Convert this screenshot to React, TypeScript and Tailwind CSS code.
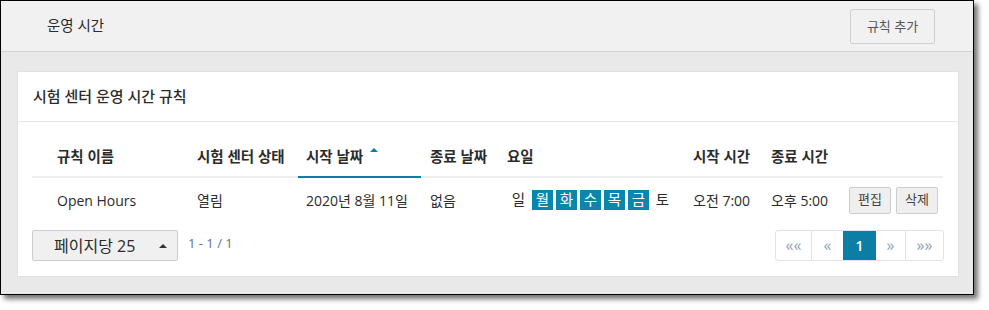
import React from 'react';

const days = [
  { label: '일', on: false },
  { label: '월', on: true },
  { label: '화', on: true },
  { label: '수', on: true },
  { label: '목', on: true },
  { label: '금', on: true },
  { label: '토', on: false },
];

const columns = [
  { label: '규칙 이름', pad: 'pl-[25px]' },
  { label: '시험 센터 상태', pad: 'pl-[8px]' },
  { label: '시작 날짜', pad: 'pl-[8px]', sorted: true },
  { label: '종료 날짜', pad: 'pl-[9px]' },
  { label: '요일', pad: 'pl-[8px]' },
  { label: '시작 시간', pad: 'pl-[8px]' },
  { label: '종료 시간', pad: 'pl-[8px]' },
  { label: '', pad: 'pl-[8px]' },
];

const gridCols = 'grid grid-cols-[157px_109px_123px_78px_186px_78px_78px_102px]';

export default function App() {
  return (
    <div className="w-[989px] h-[310px] bg-white font-['Open_Sans','Noto_Sans_CJK_KR',sans-serif] text-[#2b2b2b]">
      <div className="w-[974px] h-[295px] border border-black shadow-[4px_4px_5px_rgba(0,0,0,0.55)] flex flex-col">
        {/* top bar */}
        <div className="h-[51px] shrink-0 bg-[#f1f1f1] border-b border-[#d4d4d4] flex items-center justify-between pl-[46px] pr-[38px]">
          <h1 className="text-[14.5px]">운영 시간</h1>
          <button className="w-[85px] h-[35px] mt-[1px] border border-[#cfcfcf] rounded-[2px] bg-[#f1f1f1] text-[13px] text-[#555]">
            규칙 추가
          </button>
        </div>

        <div className="flex-1 bg-[#e9e9e9] pl-[16px] pr-[15px] pt-[19px]">
          <div className="bg-white border border-[#e1e1e1] w-[942px]">
            <div className="h-[50px] flex items-center pl-[15px] border-b border-[#e6e6e6]">
              <h2 className="text-[15px] font-medium">시험 센터 운영 시간 규칙</h2>
            </div>

            <div className="px-[14px] pt-[15px] pb-[15px]">
              {/* header row */}
              <div className={gridCols}>
                {columns.map((c, i) => (
                  <div
                    key={i}
                    className={`h-[41px] flex items-center text-[14.5px] font-semibold border-b-2 ${c.pad} ${
                      c.sorted ? 'border-[#0b7ea6]' : 'border-[#eeeeee]'
                    }`}
                  >
                    {c.label}
                    {c.sorted && (
                      <span className="ml-[7px] -mt-[13px] w-0 h-0 border-l-[4px] border-r-[4px] border-b-[4px] border-l-transparent border-r-transparent border-b-[#0b7ea6]" />
                    )}
                  </div>
                ))}
              </div>

              {/* data row */}
              <div className={`${gridCols} h-[44px] items-center text-[14px]`}>
                <div className="pl-[25px]">Open Hours</div>
                <div className="pl-[8px]">열림</div>
                <div className="pl-[8px]">2020년 8월 11일</div>
                <div className="pl-[9px]">없음</div>
                <div className="pl-[9px] flex gap-[3px]">
                  {days.map((d) => (
                    <span
                      key={d.label}
                      className={`w-[21px] h-[20px] flex items-center justify-center text-[14.5px] ${
                        d.on ? 'bg-[#0886ae] text-white' : ''
                      }`}
                    >
                      {d.label}
                    </span>
                  ))}
                </div>
                <div className="pl-[8px]">오전 7:00</div>
                <div className="pl-[8px]">오후 5:00</div>
                <div className="pl-[8px] flex gap-[5px]">
                  <button className="w-[42px] h-[27px] border border-[#cdcdcd] rounded-[2px] bg-[#efefef] text-[13px] text-[#444]">
                    편집
                  </button>
                  <button className="w-[42px] h-[27px] border border-[#cdcdcd] rounded-[2px] bg-[#efefef] text-[13px] text-[#444]">
                    삭제
                  </button>
                </div>
              </div>

              {/* footer */}
              <div className="mt-[8px] flex items-center justify-between">
                <div className="flex items-center">
                  <div className="w-[146px] h-[31px] border border-[#cdcdcd] rounded-[2px] bg-[#f0f0f0] flex items-center justify-between pl-[21px] pr-[10px]">
                    <span className="text-[16px]">페이지당 25</span>
                    <span className="w-0 h-0 border-l-[4px] border-r-[4px] border-b-[4px] border-l-transparent border-r-transparent border-b-[#333]" />
                  </div>
                  <span className="ml-[10px] -mt-[3px] text-[13px] text-[#5d7286]">1 - 1 / 1</span>
                </div>

                <div className="flex h-[31px] border border-[#dfe3e8] rounded-[3px] text-[16px] text-[#8fa4b8]">
                  <span className="w-[36px] flex items-center justify-center border-r border-[#dfe3e8] pb-[2px]">««</span>
                  <span className="w-[31px] flex items-center justify-center pb-[2px]">«</span>
                  <span className="w-[33px] flex items-center justify-center bg-[#0b7ea6] text-white text-[14px] font-semibold">1</span>
                  <span className="w-[30px] flex items-center justify-center border-r border-[#dfe3e8] pb-[2px]">»</span>
                  <span className="w-[37px] flex items-center justify-center pb-[2px]">»»</span>
                </div>
              </div>
            </div>
          </div>
        </div>
      </div>
    </div>
  );
}
